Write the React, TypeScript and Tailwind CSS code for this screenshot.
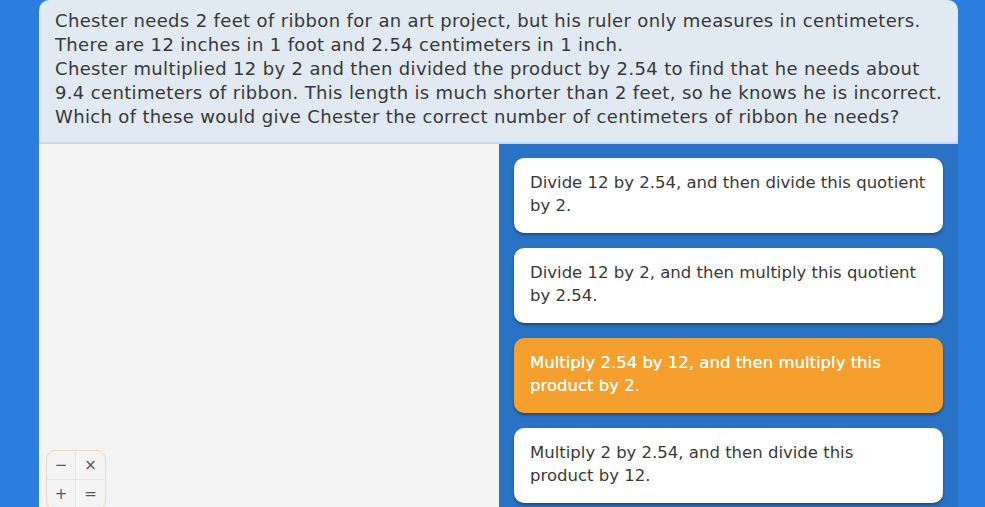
import React from 'react';

const choices = [
  { lines: ['Divide 12 by 2.54, and then divide this quotient', 'by 2.'], selected: false },
  { lines: ['Divide 12 by 2, and then multiply this quotient', 'by 2.54.'], selected: false },
  { lines: ['Multiply 2.54 by 12, and then multiply this', 'product by 2.'], selected: true },
  { lines: ['Multiply 2 by 2.54, and then divide this', 'product by 12.'], selected: false },
];

const question = [
  'Chester needs 2 feet of ribbon for an art project, but his ruler only measures in centimeters.',
  'There are 12 inches in 1 foot and 2.54 centimeters in 1 inch.',
  'Chester multiplied 12 by 2 and then divided the product by 2.54 to find that he needs about',
  '9.4 centimeters of ribbon. This length is much shorter than 2 feet, so he knows he is incorrect.',
  'Which of these would give Chester the correct number of centimeters of ribbon he needs?',
];

function Calculator() {
  return (
    <div className="absolute left-[7px] top-[306px] grid grid-cols-2 overflow-hidden rounded-[9px] border border-[#efd9b8] bg-[#f4f4f4] text-[15px] leading-none text-[#555]">
      <div className="flex h-[29px] w-[29px] items-center justify-center border-r border-b border-[#dfe6ee]">−</div>
      <div className="flex h-[29px] w-[29px] items-center justify-center border-b border-[#dfe6ee]">×</div>
      <div className="flex h-[29px] w-[29px] items-center justify-center border-r border-[#dfe6ee]">+</div>
      <div className="flex h-[29px] w-[29px] items-center justify-center">=</div>
    </div>
  );
}

export default function App() {
  return (
    <div
      className="flex h-[507px] w-[985px] overflow-hidden bg-[#2b7ddf]"
      style={{ fontFamily: '"DejaVu Sans", "Noto Sans", sans-serif' }}
    >
      <div className="w-[39px] shrink-0" />
      <div className="flex w-[919px] shrink-0 flex-col overflow-hidden rounded-t-[10px]">
        {/* Question */}
        <div className="h-[144px] shrink-0 border-b-2 border-[#c8d6e5] bg-[#e1e9f2] px-4 pt-[9px] text-[18px] leading-[24px] tracking-[0.35px] whitespace-nowrap text-[#383838]">
          {question.map((l) => (
            <p key={l}>{l}</p>
          ))}
        </div>

        <div className="flex flex-1">
          {/* Work area */}
          <div className="relative w-[460px] shrink-0 bg-[#f4f4f4]">
            <Calculator />
          </div>

          {/* Answer choices */}
          <div className="flex flex-1 flex-col gap-[15px] bg-[#2a72c5] px-[15px] pt-[14px]">
            {choices.map((c) => (
              <div
                key={c.lines[0]}
                className={`h-[75px] shrink-0 rounded-[10px] px-4 pt-[13px] text-[16.5px] leading-[23px] whitespace-nowrap shadow-[0_2px_3px_rgba(0,0,0,0.35)] ${
                  c.selected
                    ? 'bg-[#f59f2e] text-white [text-shadow:0_0_0.6px_#fff]'
                    : 'bg-white text-[#383838]'
                }`}
              >
                {c.lines.map((l) => (
                  <p key={l}>{l}</p>
                ))}
              </div>
            ))}
          </div>
        </div>
      </div>
      <div className="flex-1" />
    </div>
  );
}
